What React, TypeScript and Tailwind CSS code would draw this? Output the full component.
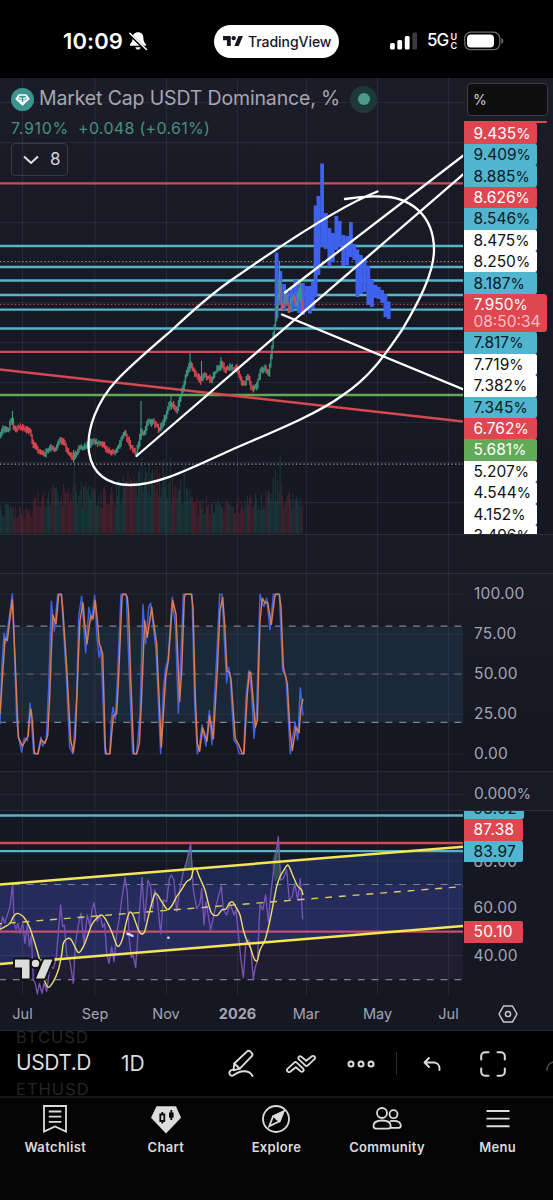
import React from 'react';

type Pt = [number, number];

const GRID_X = [22.5, 95, 166.5, 237.5, 306.5, 377.5, 448.5];

const MONTHS = [
  { label: 'Jul', box: 'w-[45px]' },
  { label: 'Sep', box: 'w-[100px]' },
  { label: 'Nov', box: 'w-[42px]' },
  { label: '2026', box: 'w-[101px] font-bold' },
  { label: 'Mar', box: 'w-[36px]' },
  { label: 'May', box: 'w-[107px]' },
  { label: 'Jul', box: 'w-[35px]' },
];

const RED = 'bg-[#e0464f] text-white';
const CYAN = 'bg-[#51b5d0] text-[#0c1a22]';
const WHITE = 'bg-white text-[#111]';
const GREEN = 'bg-[#61ab58] text-white';

const TAGS_ABOVE = [
  { v: '9.409%', c: CYAN },
  { v: '8.885%', c: CYAN },
  { v: '8.626%', c: RED },
  { v: '8.546%', c: CYAN },
  { v: '8.475%', c: WHITE },
  { v: '8.250%', c: WHITE },
  { v: '8.187%', c: CYAN },
];

const TAGS_BELOW = [
  { v: '7.817%', c: CYAN },
  { v: '7.719%', c: WHITE },
  { v: '7.382%', c: WHITE },
  { v: '7.345%', c: CYAN },
  { v: '6.762%', c: RED },
  { v: '5.681%', c: GREEN },
  { v: '5.207%', c: WHITE },
  { v: '4.544%', c: WHITE },
  { v: '4.152%', c: WHITE },
  { v: '3.496%', c: WHITE },
];

const LEVELS = [
  { y: 183.4, c: '#d04a55' },
  { y: 246, c: '#58b4cc' },
  { y: 267, c: '#58b4cc' },
  { y: 280.5, c: '#58b4cc' },
  { y: 295, c: '#58b4cc' },
  { y: 309.6, c: '#58b4cc' },
  { y: 328.5, c: '#58b4cc' },
  { y: 351.8, c: '#d04a55' },
  { y: 395, c: '#62a955' },
];

// daily closes, x / y in chart pixels
const PRICE: Pt[] = [
  [0, 435], [4, 428], [9, 429], [12.5, 418], [14, 427], [22, 428], [30, 430], [34, 444], [40, 452], [45, 455],
  [50, 448], [55, 451], [60, 440], [64, 443], [70, 454], [74, 459], [80, 448], [85, 448], [92, 442], [103, 443],
  [108, 450], [116, 453], [122, 438], [125, 433], [130, 443], [136, 455], [139, 444], [141, 431], [144, 435],
  [148, 423], [154, 421], [160, 431], [165, 420], [170, 404], [174, 405], [177, 412], [182, 393], [187, 374],
  [191, 363], [196, 374], [200, 381], [205, 375], [212, 380], [217, 370], [222, 364], [226, 370], [232, 367],
  [237, 368], [243, 385], [248, 377], [253, 390], [257, 385], [261, 371], [266, 368], [269, 373], [272, 354],
  [274, 332], [277, 312], [280, 280], [282, 308], [286, 294], [289, 311], [293, 297], [297, 305], [300, 286], [303, 310],
];

const SPIKES: [number, number, number][] = [
  [12.5, 411, 425], [141, 401, 440], [171, 396, 410], [190, 353, 372], [201.5, 361, 380], [221, 357, 370],
  [279.5, 261, 300], [73.5, 450, 463], [286, 290, 306], [300.5, 280, 302],
];

// projected candles: x, top, bottom
const PROJECTION: [number, number, number][] = [
  [274.7, 252.5, 318], [278.4, 271, 305], [282.2, 284, 310], [286, 292, 304], [289.8, 287, 312], [293.5, 280, 308],
  [297.2, 283, 313], [301, 283, 315], [304.7, 286, 311], [308, 286, 313.5], [311, 281, 309], [313.7, 205.5, 297],
  [316.5, 196, 275], [320.2, 163.5, 247], [324, 213, 249], [327.5, 228, 266.5], [331, 233, 262], [334.5, 216, 250],
  [337.8, 221, 247], [341.4, 235, 266], [345.2, 236, 265], [349, 222, 257], [352.4, 244, 260], [355.5, 249.5, 297],
  [359, 255, 294], [362.7, 259, 292], [366.4, 266, 305], [370, 280, 307], [373.5, 285, 298], [376.8, 287, 299],
  [380.2, 290, 303], [383.5, 294, 317], [386.8, 301.5, 319],
];

const LASSO =
  'M377.5 191.5C340 206 280 246 230 281C206 298 188 315 172 330C150 349 130 366 117 380C97 401 86 430 89 452C92 474 108 485 130 485C160 485 195 466 230 450.5C260 437 315 416 343 395C372 376 388 350 402 330C420 300 434 272 434 250C434 215 410 196.5 380 196.5C368 196 357 197 345 199';

const STOCH_D: Pt[] = [
  [0, 430], [15, 205], [22, 210], [28, 160], [37, 88], [45, 260], [55, 500], [67, 527], [85, 495], [88, 445], [93, 416],
  [97, 450], [103, 545], [107, 550], [114, 550], [123, 508], [135, 518], [143, 495], [149, 380], [158, 133], [168, 160],
  [176, 75], [179, 71], [184, 71], [188, 110], [200, 290], [212, 510], [220, 545], [226, 500], [236, 240], [240, 150],
  [249, 97], [255, 170], [261, 220], [272, 135], [279, 145], [286, 90], [292, 150], [298, 220], [308, 250], [316, 530],
  [319, 550], [330, 550], [335, 490], [340, 435], [350, 430], [355, 340], [366, 80], [370, 71], [376, 71], [382, 80],
  [386, 130], [392, 320], [401, 545], [404, 550], [410, 550], [418, 520], [424, 400], [434, 150], [442, 200], [455, 110],
  [460, 150], [470, 220], [484, 530], [492, 400], [497, 320], [505, 270], [518, 90], [528, 130], [539, 392], [545, 300],
  [553, 80], [556, 71], [574, 71], [579, 110], [586, 380], [592, 520], [599, 542], [608, 472], [621, 512], [629, 435],
  [640, 505], [652, 300], [660, 120], [668, 80], [674, 160], [681, 302], [688, 305], [693, 325], [706, 505], [715, 520],
  [727, 550], [732, 550], [742, 370], [748, 305], [752, 305], [758, 370], [766, 470], [772, 450], [780, 150], [787, 83],
  [795, 98], [803, 95], [814, 162], [824, 80], [828, 71], [838, 71], [843, 110], [850, 290], [862, 340], [870, 480],
  [877, 540], [888, 470], [897, 487], [903, 410], [909, 385],
];

const STOCH_K: Pt[] = [
  [0, 462], [5, 300], [12, 188], [17, 215], [25, 160], [37, 70], [40, 130], [50, 450], [58, 512], [65, 545], [73, 503],
  [82, 510], [87, 450], [90, 398], [95, 460], [101, 550], [113, 550], [123, 500], [128, 527], [139, 505], [146, 350],
  [154, 92], [163, 182], [173, 71], [184, 71], [198, 300], [209, 530], [219, 550], [230, 380], [236, 140], [245, 77],
  [257, 247], [267, 110], [275, 150], [284, 74], [291, 200], [297, 260], [303, 230], [315, 550], [329, 550], [334, 450],
  [339, 410], [346, 445], [352, 330], [363, 71], [379, 71], [388, 320], [398, 550], [410, 550], [420, 430], [429, 102],
  [437, 220], [446, 110], [452, 98], [468, 240], [482, 550], [490, 360], [497, 290], [504, 270], [517, 80], [527, 180],
  [535, 428], [543, 250], [550, 71], [576, 71], [584, 400], [592, 550], [598, 530], [606, 463], [618, 527], [628, 420],
  [636, 523], [650, 260], [659, 71], [666, 71], [672, 190], [680, 337], [686, 290], [691, 325], [702, 510], [710, 520],
  [718, 550], [731, 550], [738, 380], [747, 300], [754, 360], [762, 503], [770, 420], [780, 71], [784, 90], [792, 108],
  [800, 83], [810, 178], [820, 71], [838, 71], [848, 300], [858, 320], [871, 550], [885, 455], [893, 508], [901, 352],
  [909, 435],
];

const RSI: Pt[] = [
  [0, 390], [8, 350], [14, 370], [22, 345], [30, 320], [38, 250], [42, 370], [48, 388], [54, 370], [60, 400], [68, 370],
  [75, 430], [82, 375], [88, 440], [94, 405], [100, 540], [106, 550], [112, 582], [118, 550], [126, 580], [132, 550],
  [140, 575], [150, 500], [160, 505], [168, 480], [175, 400], [182, 315], [188, 380], [193, 375], [200, 465], [210, 485],
  [220, 550], [226, 430], [236, 370], [243, 340], [252, 430], [262, 345], [270, 380], [276, 330], [282, 308], [292, 365],
  [300, 345], [308, 382], [314, 370], [320, 460], [327, 490], [335, 440], [342, 485], [350, 400], [358, 355], [365, 300],
  [375, 233], [382, 280], [388, 420], [394, 472], [399, 465], [407, 502], [416, 370], [426, 233], [434, 363], [444, 240],
  [452, 260], [458, 325], [464, 270], [472, 300], [482, 402], [490, 300], [500, 305], [508, 235], [514, 225], [522, 240],
  [530, 335], [540, 265], [550, 215], [560, 185], [572, 130], [580, 270], [590, 325], [600, 310], [605, 265], [612, 375],
  [618, 305], [632, 390], [645, 330], [655, 290], [664, 258], [670, 330], [680, 345], [690, 312], [702, 345], [708, 330],
  [715, 400], [723, 480], [730, 532], [738, 425], [746, 420], [752, 440], [760, 538], [766, 500], [772, 485], [780, 312],
  [788, 330], [797, 285], [805, 365], [812, 285], [822, 200], [828, 165], [835, 110], [842, 240], [850, 235], [860, 210],
  [868, 300], [877, 290], [884, 250], [893, 300], [901, 236], [908, 358],
];

const RSI_MA: Pt[] = [
  [0, 388], [15, 380], [30, 370], [40, 350], [52, 340], [70, 350], [80, 365], [90, 385], [100, 415], [115, 465],
  [125, 505], [135, 545], [145, 562], [160, 545], [175, 510], [185, 465], [190, 430], [200, 417], [212, 417], [222, 435],
  [236, 458], [250, 440], [262, 410], [275, 375], [290, 355], [305, 345], [318, 360], [335, 395], [350, 435], [358, 437],
  [368, 415], [378, 370], [388, 338], [398, 343], [408, 370], [420, 398], [433, 397], [445, 350], [458, 300], [468, 280],
  [485, 305], [502, 328], [515, 318], [530, 290], [545, 268], [560, 245], [573, 235], [580, 210], [588, 206], [600, 235],
  [615, 270], [625, 310], [635, 340], [652, 346], [665, 330], [678, 327], [688, 310], [698, 306], [710, 325], [720, 345],
  [730, 390], [740, 420], [752, 445], [762, 475], [772, 482], [780, 450], [795, 420], [808, 370], [820, 310], [830, 260],
  [840, 230], [855, 205], [863, 195], [870, 205], [880, 230], [893, 258], [905, 270], [909, 285],
];

const line = (pts: Pt[]) => 'M' + pts.map((p) => p.join(' ')).join('L');

// Catmull-Rom spline through the points
const smooth = (pts: Pt[]) => {
  let d = `M${pts[0][0]} ${pts[0][1]}`;
  for (let i = 0; i < pts.length - 1; i++) {
    const a = pts[Math.max(0, i - 1)];
    const b = pts[i];
    const c = pts[i + 1];
    const e = pts[Math.min(pts.length - 1, i + 2)];
    d += `C${b[0] + (c[0] - a[0]) / 6} ${b[1] + (c[1] - a[1]) / 6} ${c[0] - (e[0] - b[0]) / 6} ${c[1] - (e[1] - b[1]) / 6} ${c[0]} ${c[1]}`;
  }
  return d;
};

const rand = (i: number) => {
  const s = Math.sin(i * 127.1 + 11.7) * 43758.5453;
  return s - Math.floor(s);
};

const valueAt = (pts: Pt[], x: number) => {
  const i = Math.max(1, pts.findIndex((p) => p[0] >= x));
  const [x0, y0] = pts[i - 1];
  const [x1, y1] = pts[i];
  return y0 + ((y1 - y0) * (x - x0)) / (x1 - x0);
};

const STEP = 1.17;
const CANDLES = Array.from({ length: 259 }, (_, i) => {
  const x = i * STEP;
  const a = valueAt(PRICE, x) + (rand(i) - 0.5) * 3;
  const b = valueAt(PRICE, Math.min(303, x + STEP)) + (rand(i + 1) - 0.5) * 3;
  const trend = valueAt(PRICE, Math.min(303, x + 2)) - valueAt(PRICE, Math.max(0, x - 2));
  const up = trend + (rand(i + 300) - 0.5) * 2 < 0;
  return { x, top: Math.min(a, b) - 0.8 - rand(i + 40) * 3, bottom: Math.max(a, b) + 0.8 + rand(i + 90) * 3, up };
});

const VOLUME: Pt[] = [
  [0, 32], [30, 26], [34, 44], [42, 52], [60, 48], [72, 56], [95, 48], [115, 52], [125, 62], [145, 74], [165, 60],
  [190, 52], [193, 38], [235, 36], [245, 42], [262, 40], [270, 54], [280, 66], [283, 42], [303, 38],
];

const VOLUME_SPIKES: Record<number, number> = { 63: 70, 121: 76, 119: 66, 145: 76, 157: 68, 139: 74, 239: 78, 235: 64 };

function GridLines({ top, bottom, rows }: { top: number; bottom: number; rows: number[] }) {
  return (
    <g stroke="#8b93b0" strokeOpacity={0.13} strokeWidth={1}>
      {GRID_X.map((x) => <line key={x} x1={x} x2={x} y1={top} y2={bottom} />)}
      {rows.map((y) => <line key={y} x1={0} x2={463} y1={y} y2={y} />)}
    </g>
  );
}

function TvMark({ fill, className }: { fill: string; className: string }) {
  return (
    <svg viewBox="0 0 36 19" className={className} fill={fill}>
      <path d="M0 0H14V19H7V7.5H0Z" />
      <circle cx="19.3" cy="3.9" r="3.9" />
      <path d="M28 0H36L28 19H20Z" />
    </svg>
  );
}

function StatusBar() {
  return (
    <div className="flex h-[78px] items-center bg-black pt-1 text-white">
      <div className="ml-[63px] w-[62px] text-[22px] font-semibold tracking-[0.1px]">10:09</div>
      <svg viewBox="0 0 20 20" className="ml-[3px] h-5 w-5" fill="white">
        <path d="M10 1.2c-3.5 0-5.4 2.4-5.4 5.6 0 3.8-1.3 4.9-2.5 6.4-.6.8-.2 1.6.8 1.6h14.2c1 0 1.4-.8.8-1.6-1.2-1.5-2.5-2.6-2.5-6.4 0-3.2-1.9-5.6-5.4-5.6Z" />
        <path d="M7.3 16.2h5.4c-.4 1.5-1.400 2.300-2.700 2.300s-2.300-.8-2.700-2.300Z" />
        <path d="M1.5 3L18 19" stroke="black" strokeWidth="3" />
        <path d="M1.800 2.200L18.500 18.500" stroke="white" strokeWidth="1.500" strokeLinecap="round" />
      </svg>
      <div className="ml-[66px] flex h-[33px] w-[125px] shrink-0 items-center rounded-full bg-white pl-[9px]">
        <TvMark fill="#15171f" className="h-[10.500px] w-[20px]" />
        <span className="ml-[5px] text-[14px] font-medium tracking-[-0.05px] text-[#15171f]">TradingView</span>
      </div>
      <svg viewBox="0 0 28 18" className="ml-[51px] h-[18px] w-7" fill="white">
        <rect x="0" y="11" width="4.8" height="6.5" rx="1.5" />
        <rect x="7.3" y="8" width="4.8" height="9.5" rx="1.5" />
        <rect x="14.8" y="4" width="4.8" height="13.5" rx="1.5" />
        <rect x="22.3" y="0.5" width="4.8" height="17" rx="1.5" fill="#3a3a3a" />
      </svg>
      <div className="ml-[9px] flex w-[31px] items-center text-[17px] font-medium tracking-[-0.9px]">
        5G
        <span className="ml-[2px] flex flex-col text-[9px] leading-[9px] font-semibold tracking-normal"><span>U</span><span>C</span></span>
      </div>
      <svg viewBox="0 0 40 20" className="ml-[6px] h-5 w-10">
        <rect x="0.7" y="1.2" width="35" height="17.5" rx="6" fill="none" stroke="#6a6a6a" strokeWidth="1.3" />
        <rect x="3" y="3.5" width="27" height="13" rx="4" fill="white" />
        <path d="M37.300 7v6c1.300-.4 2-1.600 2-3s-.7-2.600-2-3Z" fill="#6a6a6a" />
      </svg>
    </div>
  );
}

function Legend() {
  return (
    <div className="absolute top-0 left-[11px] pt-[6px]">
      <div className="flex h-[30px] items-center">
        <svg viewBox="0 0 24 24" className="h-[23px] w-[23px]">
          <circle cx="12" cy="12" r="12" fill="#3a9590" />
          <path d="M8 6.500h8l3.600 5L12 18.500 4.400 11.500Z" fill="white" />
          <path d="M8.500 8.700h7M12 8.700v5.800" stroke="#3a9590" strokeWidth="1.3" />
          <ellipse cx="12" cy="11.200" rx="4.500" ry="1.200" fill="none" stroke="#3a9590" strokeWidth="0.8" />
        </svg>
        <span className="ml-[5px] w-[301px] text-[19.500px] tracking-[-0.15px] whitespace-nowrap text-[#a5a7b1]">Market Cap USDT Dominance, %</span>
        <span className="ml-[10px] flex h-[27px] w-[27px] items-center justify-center rounded-full bg-[#1d3839]">
          <span className="h-3 w-3 rounded-full bg-[#4a9b87]" />
        </span>
      </div>
      <div className="flex h-[28px] items-center text-[16px] tracking-[0.3px] whitespace-nowrap text-[#46917f]">
        <span className="w-[67px] tracking-[0.700px]">7.910%</span>
        <span>+0.048 (+0.61%)</span>
      </div>
      <div className="mt-[1px] flex h-[33px] w-[57px] items-center rounded border-[1.500px] border-[#393b46] pl-[11px] text-[17px] text-[#d4d5da]">
        <svg viewBox="0 0 16 10" className="h-[10px] w-4" fill="none" stroke="#e2e2e6" strokeWidth="2">
          <path d="M1 1.500L8 8l7-6.500" />
        </svg>
        <span className="ml-[11px]">8</span>
      </div>
    </div>
  );
}

function PriceChart() {
  return (
    <svg viewBox="0 78 463 456" className="h-[456px] w-[463px] shrink-0">
      <GridLines top={78} bottom={534} rows={[102.5, 142.5, 182.5, 222.5, 262.5, 302.5, 342.5, 382.5, 422.5, 462.5, 502.5]} />
      {CANDLES.map((c, i) => {
        const h = VOLUME_SPIKES[i] ?? valueAt(VOLUME, c.x) * (0.5 + rand(i + 500) * 0.52);
        return <rect key={i} x={c.x} y={533.5 - h} width={0.95} height={h} fill={c.up ? '#1f5a54' : '#7a2c3a'} opacity={0.52} />;
      })}
      {LEVELS.map((l) => <line key={l.y} x1={0} x2={463} y1={l.y} y2={l.y} stroke={l.c} strokeWidth={2.3} />)}
      <g strokeWidth={1.2} strokeDasharray="1.3 2.4">
        <line x1={0} x2={463} y1={261.5} y2={261.5} stroke="#8f929c" />
        <line x1={0} x2={463} y1={304.4} y2={304.4} stroke="#c04852" />
        <line x1={0} x2={463} y1={464.2} y2={464.2} stroke="#9a9ca6" />
      </g>
      <line x1={0} y1={369.5} x2={463} y2={421.5} stroke="#d6474f" strokeWidth={2.4} />
      {PROJECTION.map(([x, t, b]) => <rect key={x} x={x} y={t} width={3.8} height={b - t} fill="#3e62ee" />)}
      {CANDLES.map((c, i) => (
        <rect key={i} x={c.x - 0.2} y={c.top} width={1.45} height={c.bottom - c.top} fill={c.up ? '#3f9a84' : '#e04a52'} opacity={0.93} />
      ))}
      {SPIKES.map(([x, t, b]) => <line key={x} x1={x} x2={x} y1={t} y2={b} stroke={x === 73.5 ? '#e04a52' : '#3f9a84'} strokeWidth={1.1} />)}
      <g fill="none" stroke="white" strokeWidth={2.3} strokeLinecap="round">
        <path d={LASSO} />
        <path d="M136.5 456L466 172" />
        <path d="M285 292.5L466 153.5" />
        <path d="M282 314.500L466 390.500" />
      </g>
    </svg>
  );
}

function Value({ v }: { v: string }) {
  if (!v.endsWith('%')) return <span className="tracking-[0.250px]">{v}</span>;
  return <span>{v.slice(0, -1)}<span className="text-[14.500px]">%</span></span>;
}

function Tag({ v, c }: { v: string; c: string }) {
  return (
    <div className={`flex h-[21.400px] w-[73px] shrink-0 items-center rounded-r-[2px] pl-[10px] ${c}`}><Value v={v} /></div>
  );
}

function PriceAxis() {
  return (
    <div className="h-[456px] w-[90px] overflow-hidden">
      <div className="mt-[5px] ml-1 flex h-[33px] w-[81px] items-center rounded border-[1.500px] border-[#3e3e42] bg-[#0e0e0f] pl-[5px] text-[14px] text-[#d0d0d4]">%</div>
      <div className="mt-[4.700px] flex flex-col pl-[0.500px] text-[15.500px]">
        <div className="h-[2px] w-[83px] rounded-r-[2px] bg-[#e0464f]" />
        <Tag v="9.435%" c={RED} />
        {TAGS_ABOVE.map((t) => <Tag key={t.v} {...t} />)}
        <div className="flex h-[38.600px] w-[83px] shrink-0 flex-col justify-center rounded-r-[3px] bg-[#e0464f] pl-[10px] leading-[17.500px] text-white">
          <Value v="7.950%" />
          <span className="text-[#f8bfc2]">08:50:34</span>
        </div>
        {TAGS_BELOW.map((t) => <Tag key={t.v} {...t} />)}
      </div>
    </div>
  );
}

function StochPane() {
  return (
    <div className="flex h-[198px] border-t border-[#2b2d39] bg-gradient-to-b from-[#1b1c27] to-[#141620]">
      <svg viewBox="0 573.5 463 197" className="h-[197px] w-[463px] shrink-0">
        <rect x={0} y={626} width={463} height={96} fill="#1b2838" />
        <GridLines top={573} bottom={771} rows={[593.5, 633.5, 673.5, 713.5, 753.5]} />
        <g stroke="#7d828e" strokeWidth={1.2} strokeDasharray="6.9 6.9">
          <line x1={-1} x2={463} y1={625.6} y2={625.6} />
          <line x1={-1} x2={463} y1={673.6} y2={673.6} stroke="#56606e" />
          <line x1={-1} x2={463} y1={721.8} y2={721.8} />
        </g>
        <g transform="translate(0 570) scale(0.33333)" fill="none" strokeWidth={4.4} strokeLinejoin="round">
          <path d={line(STOCH_K)} stroke="#3d63e4" />
          <path d={line(STOCH_D)} stroke="#dc7c51" />
        </g>
      </svg>
      <div className="flex flex-col pl-[11px] text-[15.500px] text-[#a3a6b2]">
        {['100.00', '75.00', '50.00', '25.00', '0.00'].map((v) => (
          <div key={v} className="flex h-10 shrink-0 items-center"><Value v={v} /></div>
        ))}
      </div>
    </div>
  );
}

function EmptyPane({ label, top }: { label?: string; top: number }) {
  return (
    <div className="flex h-[39px] items-center border-t border-[#2b2d39] bg-[#191a25]">
      <svg viewBox={`0 ${top} 463 38`} className="h-[38px] w-[463px] shrink-0">
        <GridLines top={top} bottom={top + 38} rows={label ? [top + 22.5] : []} />
      </svg>
      {label && <div className="pt-[5px] pl-[11px] text-[15.500px] text-[#a3a6b2]"><Value v={label} /></div>}
    </div>
  );
}

function RsiPane() {
  return (
    <div className="flex h-[185px] border-t border-[#2b2d39]">
      <svg viewBox="0 811 463 184" className="h-[184px] w-[463px] shrink-0">
        <path d="M0 884.5H463V979.5H0Z" fill="#211d30" />
        <path d="M0 884.5L463 846.8V926L0 964Z" fill="#1d2950" />
        <path d="M0 884.5H463V926L0 964Z" fill="#252c5b" />
        <GridLines top={811} bottom={995} rows={[861, 908.5, 955.5]} />
        <path d="M183 870L187 858L190.7 843L193 870Z" fill="#2b524b" />
        <path d="M272 862L278.5 838L281 874L275 882Z" fill="#2b524b" />
        <g strokeWidth={2.3}>
          <line x1={0} x2={463} y1={815.5} y2={815.5} stroke="#58b4cc" />
          <line x1={0} x2={463} y1={843} y2={843} stroke="#d04a55" />
          <line x1={0} x2={463} y1={851.2} y2={851.2} stroke="#58b4cc" />
          <line x1={0} x2={463} y1={931.6} y2={931.6} stroke="#c94d6e" />
        </g>
        <g stroke="#7d828e" strokeWidth={1.1} strokeDasharray="6.9 6.9">
          <line x1={-1} x2={463} y1={884.5} y2={884.5} />
          <line x1={-1} x2={463} y1={979.6} y2={979.6} />
        </g>
        <g transform="translate(0 800) scale(0.33333)" fill="none" strokeLinejoin="round">
          <path d={line(RSI)} stroke="#7854b6" strokeWidth={4} />
          <path d={smooth(RSI_MA)} stroke="#f1de70" strokeWidth={4.2} />
        </g>
        <line x1={-5} y1={924.2} x2={463} y2={886.5} stroke="#dccb62" strokeWidth={1.4} strokeDasharray="6.9 6.9" />
        <g stroke="#f5e653" strokeWidth={2.5}>
          <line x1={0} y1={884.5} x2={463} y2={846.8} />
          <line x1={0} y1={964} x2={463} y2={926} />
        </g>
        <g fill="#dfe2ff">
          <path d="M126.500 932.500l4 .8v2.500l-4-.9zM130.500 933.900l3 .9v2.400l-3-.9z" />
          <circle cx={168.4} cy={937.8} r={1.3} />
        </g>
        <g transform="translate(15 959.5)" fill="#dcdcdc" stroke="#101014" strokeWidth={4} strokeLinejoin="round" paintOrder="stroke">
          <path d="M0 0H14.500V19H7V8H0Z" />
          <path d="M29 0H37.500L29.500 19H21Z" />
          <circle cx="20.500" cy="3.900" r="3.700" />
        </g>
      </svg>
      <div className="flex h-[184px] w-[90px] flex-col overflow-hidden pl-[0.500px] text-[15.500px]">
        <div className="-mt-[13.500px] flex h-[21.500px] w-[60px] shrink-0 items-center rounded-r-[2px] bg-[#51b5d0] pl-[10px] text-[#0c1a22]"><Value v="98.92" /></div>
        <div className="flex h-[21.500px] w-[59px] shrink-0 items-center rounded-r-[2px] bg-[#e0464f] pl-[10px] text-white"><Value v="87.38" /></div>
        <div className="relative z-10 flex h-[21.500px] w-[59px] shrink-0 items-center rounded-r-[2px] bg-[#51b5d0] pl-[10px] text-[#0c1a22]"><Value v="83.97" /></div>
        <div className="-mt-[12px] flex h-6 shrink-0 items-center pl-[10px] text-[#a3a6b2]"><Value v="80.00" /></div>
        <div className="mt-[22px] flex h-6 shrink-0 items-center pl-[10px] text-[#a3a6b2]"><Value v="60.00" /></div>
        <div className="mt-[1px] flex h-[21.500px] w-[59px] shrink-0 items-center rounded-r-[2px] bg-[#e0464f] pl-[10px] text-white"><Value v="50.10" /></div>
        <div className="mt-[1px] flex h-6 shrink-0 items-center pl-[10px] text-[#a3a6b2]"><Value v="40.00" /></div>
      </div>
    </div>
  );
}

function TimeAxis() {
  return (
    <div className="flex h-[35px] items-center pt-[3px] text-[14.500px] text-[#a3a6b2]">
      {MONTHS.map((m, i) => (
        <div key={i} className={`flex shrink-0 justify-center whitespace-nowrap ${m.box}`}>{m.label}</div>
      ))}
      <svg viewBox="0 0 20 20" className="ml-[32px] h-5 w-5" fill="none" stroke="#c4c6ce" strokeWidth="1.5">
        <path d="M5.600 1.900h8.800L19 10l-4.600 8.100H5.600L1 10Z" strokeLinejoin="round" />
        <circle cx="10" cy="10" r="2.600" />
      </svg>
    </div>
  );
}

function Toolbar() {
  return (
    <div className="flex h-[66px] items-center overflow-hidden border-t border-[#26262b] bg-black text-[#dcdcdc]">
      <div className="ml-4 flex h-[66px] w-[82px] shrink-0 flex-col justify-center">
        <div className="h-[16px] text-[16.500px] leading-[14px] tracking-[1px] text-[#242424]">BTCUSD</div>
        <div className="h-[38px] text-[21px] leading-[38px] tracking-[-0.450px]">USDT.D</div>
        <div className="h-[16px] text-[16.500px] leading-[15px] tracking-[1px] text-[#242424]">ETHUSD</div>
      </div>
      <div className="ml-[23px] w-[26px] shrink-0 text-[21px]">1D</div>
      <svg viewBox="0 0 28 30" className="ml-[80px] h-[30px] w-7 shrink-0" fill="none" stroke="currentColor" strokeWidth="1.9" strokeLinecap="round" strokeLinejoin="round">
        <path d="M7.300 14.500L19.800 2.600c1-1 2.600-1 3.600 0l1.200 1.200c1 1 1 2.600 0 3.600L12.800 19.700l-6.300 1.600Z" />
        <path d="M7.300 14.500l5.500 5.200" />
        <path d="M5.800 20.600c-2.600.5-3.700 2.200-3.300 4.200.4 1.800 2.300 2.500 4.300 1.200 3-2 5.500-3.600 9.700-3.700 4-.1 7.500 1.700 9 4.700" />
      </svg>
      <svg viewBox="0 0 30 20" className="ml-[31px] h-5 w-[30px] shrink-0" fill="none" stroke="currentColor" strokeWidth="1.8" strokeLinejoin="round">
        <path d="M1.500 14.800L8.200 8.600c.9-.8 1.800-.8 2.600 0l6.300 6c1.600 1.800-.5 4.200-2.500 2.700L9.800 13.200 4.200 17.700c-2 1.400-4.300-1-2.700-2.900Z" />
        <path d="M28.500 5.200L21.800 11.400c-.9.800-1.800.8-2.600 0l-6.300-6c-1.600-1.800.5-4.200 2.500-2.700L20.200 6.800l5.600-4.500c2-1.400 4.300 1 2.700 2.900Z" />
      </svg>
      <svg viewBox="0 0 28 8" className="ml-[31px] h-2 w-7 shrink-0" fill="none" stroke="currentColor" strokeWidth="2">
        <circle cx="4" cy="4" r="2.500" />
        <circle cx="14" cy="4" r="2.500" />
        <circle cx="24" cy="4" r="2.500" />
      </svg>
      <div className="ml-[21px] h-[23px] w-px shrink-0 bg-[#2c2c2c]" />
      <svg viewBox="0 0 18 16" className="ml-[26px] h-4 w-[18px] shrink-0" fill="none" stroke="currentColor" strokeWidth="1.9" strokeLinecap="round" strokeLinejoin="round">
        <path d="M6 2L1.500 6.500 6 11M2 6.500h8.500c3.500 0 6 2.300 6 6v1.500" />
      </svg>
      <svg viewBox="0 0 26 26" className="ml-[39px] h-[26px] w-[26px] shrink-0" fill="none" stroke="currentColor" strokeWidth="2" strokeLinecap="round">
        <path d="M1.200 8.500V5.200c0-2.200 1.800-4 4-4h3.300M17.500 1.200h3.300c2.200 0 4 1.800 4 4v3.300M24.800 17.500v3.300c0 2.200-1.800 4-4 4h-3.300M8.500 24.800H5.200c-2.200 0-4-1.800-4-4v-3.300" />
      </svg>
      <svg viewBox="0 0 8 12" className="mt-1 ml-10 h-3 w-2 shrink-0" fill="none" stroke="#4c4c4c" strokeWidth="1.7" strokeLinecap="round">
        <path d="M1 10C1 6 3.500 2.500 8 2" />
      </svg>
    </div>
  );
}

function NavItem({ label, children }: { label: string; children: React.ReactNode }) {
  return (
    <div className="flex flex-1 flex-col items-center">
      <svg viewBox="0 0 32 30" className="h-[30px] w-8" fill="none" stroke="currentColor" strokeWidth="1.8">
        {children}
      </svg>
      <span className="mt-1 text-[13px] font-semibold tracking-[0.350px]">{label}</span>
    </div>
  );
}

function BottomNav() {
  return (
    <div className="flex h-[104px] border-t-2 border-[#161616] bg-[#040404] pt-[6px] text-[#dcdcdc]">
      <NavItem label="Watchlist">
        <path d="M5 2h22v25.500L16 22.500 5 27.500ZM9.800 7.500h12.500M9.800 12.700h12.500M9.800 17.900h12.500" />
      </NavItem>
      <NavItem label="Chart">
        <path d="M6.500 2.200h19.500L31 13.800 16 29.500 1 13.800Z" fill="currentColor" stroke="none" />
        <path d="M10.300 10.500h4v6.500h-4ZM12.300 8v2.500M12.300 17v2.500M21.300 6v10" stroke="#0a0a0a" strokeWidth="1.8" />
        <path d="M19 8.500h4.600v5.200H19Z" fill="#0a0a0a" stroke="none" />
      </NavItem>
      <NavItem label="Explore">
        <circle cx="16" cy="15" r="13" />
        <path d="M23.500 7.500L19.800 17 9.300 22.200 13 12.500Z" />
        <path d="M23.500 7.500L19.300 17.200 13.500 12.300Z" fill="currentColor" />
      </NavItem>
      <NavItem label="Community">
        <circle cx="11" cy="9" r="5" />
        <circle cx="22.500" cy="10.200" r="4" />
        <path d="M2.500 22c0-3.500 3-5.500 8.700-5.500s8.500 2 8.500 5.500c0 1.800-.8 2.600-2.400 2.600H4.900c-1.600 0-2.400-.8-2.400-2.600Z" />
        <path d="M19 17.200c1-.3 2.200-.4 3.500-.4 5 0 7.300 1.800 7.300 4.700 0 1.500-.7 2.300-2 2.300h-8.500" />
      </NavItem>
      <NavItem label="Menu">
        <path d="M4.500 7h23M4.500 14.600h23M4.500 22.200h23" strokeWidth="1.9" />
      </NavItem>
    </div>
  );
}

export default function App() {
  return (
    <div className="h-[1200px] w-[553px] overflow-hidden bg-[#151722] font-['Inter',sans-serif]">
      <StatusBar />
      <div className="relative flex h-[456px] bg-gradient-to-b from-[#1b1c28] via-[#171924] to-[#151722]">
        <PriceChart />
        <PriceAxis />
        <Legend />
      </div>
      <EmptyPane top={534} />
      <StochPane />
      <EmptyPane top={771} label="0.000%" />
      <RsiPane />
      <TimeAxis />
      <Toolbar />
      <BottomNav />
    </div>
  );
}
